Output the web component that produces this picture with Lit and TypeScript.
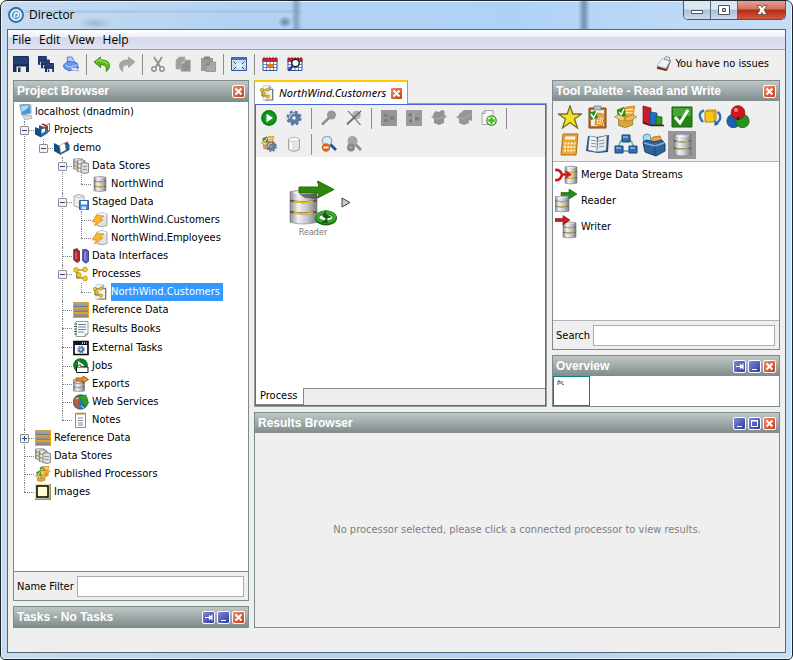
import { LitElement, html, svg, css, nothing, TemplateResult, SVGTemplateResult } from "lit";
import { customElement, state } from "lit/decorators.js";
import { classMap } from "lit/directives/class-map.js";

/** A stack of three metal drums with golden seams. */
const drums = (x: number, y: number, w: number, h: number): SVGTemplateResult => {
  const c = h * 0.05;
  const r = x + w;
  const m = x + w / 2;
  return svg`
    <path d="M${x} ${y + c}Q${m} ${y - c} ${r} ${y + c}V${y + h - c}Q${m} ${y + h + c} ${x} ${y + h - c}Z" fill="url(#metal)" stroke="#77777d" stroke-width=".6"/>
    <path d="M${x + w * 0.12} ${y + c * 1.4}Q${m} ${y + c * 3} ${r - w * 0.12} ${y + c * 1.4}" fill="none" stroke="#fff" stroke-opacity=".6" stroke-width="${c}"/>
    ${[1, 2].map((i) => {
      const t = y + (i * h) / 3;
      return svg`<path d="M${x} ${t - c / 2}Q${m} ${t + c * 1.5} ${r} ${t - c / 2}" fill="none" stroke="#55555a" stroke-width="${c * 1.2}"/>
        <path d="M${x + w * 0.14} ${t}Q${m} ${t + c * 1.3} ${r - w * 0.14} ${t}" fill="none" stroke="#f2c20c" stroke-width="${c}"/>`;
    })}`;
};

const gear = (cx: number, cy: number, r: number, fill: string): SVGTemplateResult => svg`
  <circle cx=${cx} cy=${cy} r=${r * 0.84} fill="none" stroke=${fill} stroke-width=${r * 0.32} stroke-dasharray="${r * 0.38} ${r * 0.28}"/>
  <circle cx=${cx} cy=${cy} r=${r * 0.52} fill="none" stroke=${fill} stroke-width=${r * 0.56}/>
  <path d="M${cx - r * 0.6} ${cy + r * 0.1}A${r * 0.6} ${r * 0.6} 0 0 1 ${cx + r * 0.1} ${cy - r * 0.6}" fill="none" stroke="#dfeaf6" stroke-opacity=".7" stroke-width=${r * 0.2}/>`;

const box = (x: number, y: number, k: number): SVGTemplateResult => svg`
  <g transform="translate(${x} ${y}) scale(${k})">
    <path d="M6 8L8 1L15 0L13.500 8Z" fill="#f4a62a" stroke="#b77412" stroke-width=".5"/>
    <path d="M8 3L13.500 2.500M7.500 5H13.500" stroke="#fff3cf" stroke-width=".8"/>
    <path d="M2 3L7 1L8 7L3 8.500Z" fill="#2f9a16" stroke="#1d6b0a" stroke-width=".5"/>
    <path d="M3.500 4.500L5 6.500L7 2" stroke="#fff" fill="none"/>
    <path d="M3 10L13.500 9V14L8 16L3 14.500Z" fill="#d9a73d" stroke="#9d741c" stroke-width=".6"/>
    <path d="M0 8L3 6.500L8 8.500L6 11.500Z" fill="#f3cf78" stroke="#9d741c" stroke-width=".5"/>
    <path d="M8 8.500L13.500 6.500L16.500 8L12 11L7.500 11Z" fill="#e6bb58" stroke="#9d741c" stroke-width=".5"/>
  </g>`;

const nodes = svg`
  <path d="M4 4V12H11M4 4H11" fill="none" stroke="#6b5a16" stroke-width="1.200"/>
  ${[[3, 4], [12, 3.500], [6, 9], [12, 12.5]].map(([x, y]) => svg`<circle cx=${x} cy=${y} r="2.400" fill="#f3cf1a" stroke="#a38208" stroke-width=".6"/>`)}`;

const refTable = svg`<path d="M0 0H16V16H0Z" fill="#9c9c9c"/><path d="M0 1H16M0 6H16M0 10.500H16M0 15.500H16" stroke="#f0a416" stroke-width="1.200"/>
  <path d="M.5 0V16M15.500 0V16" stroke="#efa213"/><path d="M1 4.500H15M1 9.200H15M1 14H15" stroke="#777" stroke-width="1"/>`;

const calendar = svg`<path d="M1 3H15V14.500H1Z" fill="#fff" stroke="#33548c"/><path d="M.5 2H15.500V6H.5Z" fill="#c4262c"/>
  <path d="M2 1V3.500M5 1V3.500M8 1V3.500M11 1V3.500M14 1V3.500" stroke="#5c2a30"/>
  <path d="M1 8.500H15M1 11.500H15M4.500 6V14M8 6V14M11.500 6V14" stroke="#5578b5" stroke-width=".9"/>`;

const floppy = (x: number, y: number, k: number): SVGTemplateResult => svg`<g transform="translate(${x} ${y}) scale(${k})">
  <path d="M0 0H15L16 1V16H0Z" fill="#17305c"/><path d="M1 1H15V8H1Z" fill="#233f73"/>
  <path d="M3.500 10.500H13V16H3.500Z" fill="#e9edf3"/><path d="M5 11.500H7.500V16H5Z" fill="#22304c"/></g>`;

const ICONS: Record<string, SVGTemplateResult> = {
  app: svg`<circle cx="8" cy="8" r="7.900" fill="#2a5d88"/><circle cx="8" cy="8" r="6.800" fill="#4d9bd0"/>
    <circle cx="8" cy="8" r="5" fill="none" stroke="#fff" stroke-width="1.500"/>
    <path d="M6.500 11V7.800A2 2 0 1 1 8.500 9.800" fill="none" stroke="#fff" stroke-width="1.500"/>`,
  save: floppy(0, 0, 1),
  saveAll: svg`${floppy(0, 0, 0.55)}${floppy(3, 3.5, 0.55)}${floppy(7, 7, 0.56)}`,
  print: svg`<path d="M4 1H9L12 7H5Z" fill="#b9d0f6" stroke="#5d88d8"/><path d="M.5 9L5 5L14 7L15.500 12L6 15L1 12Z" fill="#6a95e6" stroke="#3562bd" stroke-width=".8"/>
    <path d="M2 9L6 11L14 9" stroke="#bcd3fb" fill="none"/><path d="M7 11L14 12L15.500 15L9 14Z" fill="#e8f0fe" stroke="#5b86d8" stroke-width=".6"/>`,
  undo: svg`<path d="M0 6L6.500 1V4C12 3.500 15.500 6 15.500 9.500C15.500 12.500 14 14.500 12 15.500C13 12 12 8.500 6.500 8.800V11.500Z" fill="#58bb17" stroke="#2c7a05" stroke-width=".8"/>
    <path d="M2 6L6 3V5C10 5 13 6 14 8.500" fill="none" stroke="#a9ea70" stroke-width=".9"/>`,
  redo: svg`<path d="M16 6L9.500 1V4C4 3.500 .5 6 .5 9.500C.5 12.500 2 14.500 4 15.500C3 12 4 8.500 9.500 8.800V11.500Z" fill="#a6a6a6" stroke="#8f8f8f" stroke-width=".6"/>`,
  cut: svg`<path d="M4 1L10.500 11.500M12 1L5.500 11.500" stroke="#909090" stroke-width="1.800"/><circle cx="4" cy="13" r="2.200" fill="none" stroke="#909090" stroke-width="1.500"/><circle cx="12" cy="13" r="2.200" fill="none" stroke="#909090" stroke-width="1.500"/>`,
  copy: svg`<path d="M1 4L4 1H10V13H1Z" fill="#9d9d9d" stroke="#b3b3b3" stroke-width=".7"/><path d="M6 7L9 4H15.500V15.500H6Z" fill="#929292" stroke="#bcbcbc" stroke-width=".7"/><path d="M9 4V7H6" stroke="#c8c8c8" fill="none"/>`,
  paste: svg`<path d="M1 2H13V15H1Z" fill="#9a9a9a"/><path d="M4 .5H10V3.500H4Z" fill="#858585"/><path d="M6 9L9 6H15.500V15.500H6Z" fill="#a9a9a9" stroke="#878787" stroke-width=".7"/><path d="M9 6V9H6" stroke="#777" fill="none"/>`,
  fit: svg`<path d="M.5 1.500H15.500V14.500H.5Z" fill="#cfe2f2" stroke="#27589a"/><path d="M1 1.500H15V4H1Z" fill="#3c77c0"/>
    <path d="M2.500 5.500L5 8M13.500 5.500L11 8M2.500 13.500L5 11M13.500 13.500L11 11" stroke="#1d3f78"/><path d="M5 7H11V12H5Z" fill="#dfedf6"/>`,
  calendar: svg`${calendar}<path d="M5 8H11V11H5Z" fill="#ec7b1f"/>`,
  calendarFind: svg`${calendar}<circle cx="8.500" cy="7" r="3.700" fill="#fff" stroke="#111" stroke-width="1.300"/><path d="M5.500 10L1.500 14.500" stroke="#1c33b0" stroke-width="2.200"/>`,
  issues: svg`<path d="M1 11L6 3L15 5L11 15L1 13Z" fill="#8a5236"/><path d="M1 10L6 2.500L14.500 4.500L10 12.500Z" fill="#eef1f6" stroke="#8d93a3" stroke-width=".6"/>
    <path d="M8 3L10 .5L13.500 1.500L14 5Z" fill="#dfe4ee" stroke="#6f7a92" stroke-width=".8"/><path d="M1 11.500L10 14.500" stroke="#5d2f1b" stroke-width="1.300"/>`,
  host: svg`<path d="M2 1L12 0L13 9L4 11Z" fill="#3b9ae4" stroke="#8fa0b5" stroke-width="1.200"/><path d="M3 2L11 1.200L9 5L3.500 8Z" fill="#aadcfb"/><path d="M12 0L14 1V9L13 9Z" fill="#ced4dc"/>
    <path d="M5 12L13 11L14 14L7 16Z" fill="#d8dde4" stroke="#8c97a6" stroke-width=".6"/>`,
  projects: svg`<path d="M4 3L9 5L15 1V9L9 13L4 10Z" fill="#1f5d8f"/><path d="M9 5L14.500 1.500V8L9 12Z" fill="#fff" stroke="#555" stroke-width=".5"/><path d="M7 2L12 4" stroke="#c32222" stroke-width="1.500"/>
    <path d="M0 5L6 7.500V15.500L0 12.500Z" fill="#134f80"/><path d="M6 7.500L13 4V11L6 15.500Z" fill="#2270a8"/><path d="M6.500 7.500L10 5.800V9.500L6.500 11.500Z" fill="#fff"/><path d="M8.500 6.500L12 4.500V7" stroke="#c32222" stroke-width="1.300" fill="none"/>`,
  project: svg`<path d="M0 3L6 6V14.500L0 11Z" fill="#14507f"/><path d="M6 6L13 2L15.500 5V10L6 15Z" fill="#1c5f94"/><path d="M5.500 5.500L11 2.500L12 10L6.500 13Z" fill="#fff" stroke="#777" stroke-width=".5"/><path d="M10.500 4L13.500 2.500L14 6" stroke="#c32222" stroke-width="1.300" fill="none"/>`,
  stores: svg`${drums(0.5, 0.5, 9, 11)}${drums(4, 2, 8, 12)}<path d="M8 5.500Q12 3.500 15.500 5.500V14.500Q12 16.500 8 14.500Z" fill="#dcdce0" stroke="#707076" stroke-width=".8"/><path d="M9.500 8.500H14M9.500 11.500H14" stroke="#98989f"/>`,
  store: drums(2, 0.5, 12, 15),
  staged: svg`<path d="M1 2Q6 -1 11 2V12Q6 15 1 12Z" fill="#ededf0" stroke="#8f8f96" stroke-width=".7"/><path d="M1 2.500Q6 5 11 2.500" fill="none" stroke="#b5b5bb" stroke-width=".7"/>
    <path d="M6.500 6.500H15.500V15.500H6.500Z" fill="#4d83cf" stroke="#2c61ad"/><path d="M8 7H14V10.500H8Z" fill="#fff"/><path d="M8.500 12.500H13V15.500H8.500Z" fill="#cfe0f7"/>`,
  snapshot: svg`<path d="M5 2Q10 -.5 15 2V13.500Q10 16 5 13.500Z" fill="#e2e2e8" stroke="#85858c" stroke-width=".7"/><ellipse cx="10" cy="2.500" rx="4.500" ry="1.500" fill="#f8f8fb"/>
    <path d="M4.500 3L12 4L8 7L11 8L2 14L4.500 10L0 10Z" fill="#f9b92d" stroke="#d98b12" stroke-width=".7"/>`,
  interfaces: svg`<path d="M0 1L5 0V13L3.500 14L0 12Z" fill="#7d7d86"/><path d="M1.500 2Q4 0 6.500 3V13Q4 16 1.500 12Z" fill="#b9272b" stroke="#6e1a20" stroke-width=".8"/><path d="M9 1H14V13H9Z" fill="#84848e"/><path d="M10 3Q12.500 0 15.500 3V13Q13 17 10 13Z" fill="#5b63c4" stroke="#2d3176" stroke-width=".8"/><path d="M3 4V11M12 4V12" stroke="#fff" stroke-opacity=".5"/>`,
  processes: nodes,
  process: svg`<path d="M4 .5H11L14.500 4V15.500H4Z" fill="#f3f3f5" stroke="#c2c2c6" stroke-width=".7"/><path d="M3 5V11H9M3 5H9" fill="none" stroke="#6b5a16"/>
    ${[[3, 5], [9, 4.5], [5, 8.5], [9, 11.5]].map(([x, y]) => svg`<circle cx=${x} cy=${y} r="1.700" fill="#f0c81a" stroke="#8d7008" stroke-width=".5"/>`)}<path d="M11 1V4.500H14M13.500 5V15H6" stroke="#76767b" fill="none"/>`,
  reference: refTable,
  results: svg`<path d="M3 .5H15V13L12 15.500H3Z" fill="#fbfcf4" stroke="#8a9488" stroke-width=".9"/><path d="M5 3.500H13M5 6H13M5 8.500H13M5 11H11" stroke="#5b86b8"/><path d="M1 3H4M1 5.500H4M1 8H4M1 10.500H4M1 13H4" stroke="#3f6f48" stroke-width="1.200"/><path d="M12 15.500V13H15" stroke="#8a9488" fill="#cdd6bd"/>`,
  external: svg`<path d="M1 1.500H15V14.500H1Z" fill="#fff" stroke="#000" stroke-width="1.600"/><path d="M1 1H15V5H1Z" fill="#10142c"/><path d="M9 3H13.500" stroke="#fff" stroke-dasharray="1 1" stroke-width="1.500"/>${gear(8, 9.5, 3.8, "#5877a8")}`,
  jobs: svg`<circle cx="7.500" cy="7.500" r="7.300" fill="#0c7f17"/><path d="M5 3L11.500 7.500L5 11Z" fill="#fff"/><path d="M3.500 9H15V14.500H3.500Z" fill="#fff" stroke="#111" stroke-width="1"/><path d="M4 9L6 7H8V9" fill="#fff" stroke="#111" stroke-width=".8"/>`,
  exports: svg`${drums(0.500, 3, 11, 12.500)}<path d="M3 2H10V0L15.500 3.500L10 7V5H3Z" fill="#f09223" stroke="#8a4304" stroke-width=".8"/>`,
  web: svg`<circle cx="7.500" cy="8" r="7.300" fill="#2b78b6" stroke="#1d4f7c" stroke-width=".7"/><path d="M1 6Q2 1 6 1L7 6L5 9L7 14Q1 13 1 6Z" fill="#d0562e"/><path d="M5 2L13 1L15.500 9L12 13L9 7Z" fill="#2fa32b" stroke="#15700f" stroke-width=".6"/><path d="M3 5L6 4M8 12L11 14" stroke="#bfe0f5"/>`,
  notes: svg`<path d="M2.500 1.500H12.500V15.500H2.500Z" fill="#fff" stroke="#8b8b92"/><path d="M4 .5V3M6 .5V3M8 .5V3M10 .5V3M12 .5V3" stroke="#b98b2a"/><path d="M5 6H10M5 8.500H10M5 11H10M5 13H10" stroke="#737a85" stroke-width=".9"/>`,
  published: svg`<g transform="translate(3.500 -.5)">${box(0, 0, 0.72)}</g>${box(0, 4, 0.74)}`,
  images: svg`<path d="M0 0H16V16H0Z" fill="#9c9468"/><path d="M0 0H14.500V14.500H0Z" fill="#e8dfb0"/><path d="M2 2H13V13H2Z" fill="#fffbd2" stroke="#000" stroke-width="1.500"/>`,
  run: svg`<circle cx="8" cy="8" r="7.900" fill="#087f10"/><circle cx="8" cy="8" r="6" fill="#16981d"/><path d="M5.500 3.800L12 8L5.500 12.200Z" fill="#fff"/>`,
  gear: gear(8, 8, 7.6, "#5c7ba3"),
  link: svg`<circle cx="10.500" cy="5" r="4.500" fill="#979797"/><path d="M8 8L1 14.500" stroke="#8b8b8b" stroke-width="2.400"/>`,
  unlink: svg`<circle cx="10.500" cy="5" r="4.300" fill="#b0b0b0"/><path d="M8 8L1 14.500" stroke="#a2a2a2" stroke-width="2.200"/><path d="M2 1L14.500 15M15 1L1 14" stroke="#5e5e5e" stroke-width="1.100"/>`,
  group: svg`<path d="M0 0H16V16H0Z" fill="#969696"/><path d="M3 4H7V7H3ZM9 6H13V10H9ZM3 9H7V12H3Z" fill="#7e7e7e"/>`,
  ungroup: svg`<path d="M0 0H16V16H0Z" fill="#9b9b9b"/><path d="M2.500 3.500H6V6.500H2.500ZM9 7H13V10.500H9ZM3 9.500H6.500V12.500H3Z" fill="#7c7c7c"/><path d="M7.500 3V13" stroke="#b5b5b5"/>`,
  pack: svg`<path d="M2 4L5 1L8 2L11 0L13.500 1V5L16 6L13 9V13L8 15L3 13V9L0 7L2.500 5.500Z" fill="#929292"/><path d="M1 7L7 9L14 6.500" stroke="#adadad" fill="none"/>`,
  unpack: svg`<path d="M3 4L8 0H16V11L13 10V13L8 15L3 13V9L0 7L3 5.500Z" fill="#979797"/><path d="M1 7L7 9L15 4" stroke="#b0b0b0" fill="none"/>`,
  addPage: svg`<path d="M1 3L4 .5H12V14.500H1Z" fill="#f6f6f8" stroke="#a6a6ac"/><path d="M4 .5V3.500H1" fill="none" stroke="#a6a6ac"/><circle cx="10.500" cy="10.500" r="4.700" fill="#fff" stroke="#2c8c12" stroke-width="1.200"/><path d="M10.500 7.200V13.800M7.200 10.500H13.800" stroke="#34c40b" stroke-width="2.400"/>`,
  packGear: svg`${box(0, 0, 0.85)}${gear(10.500, 10.500, 5.400, "#64789a")}`,
  cylinder: svg`<path d="M2.500 3Q8 -.5 13.500 3V13.500Q8 17 2.500 13.500Z" fill="#e4e4e6" stroke="#a3a3a6"/><ellipse cx="8" cy="3.500" rx="5" ry="2" fill="#fafafa" stroke="#b8b8bb" stroke-width=".6"/><path d="M5 7V13" stroke="#fff" stroke-width="2"/>`,
  zoomOut: svg`<circle cx="6" cy="5" r="4.700" fill="#d9ecf9" stroke="#8fa6b8" stroke-width="1.300"/><path d="M9.500 8.500L15 14" stroke="#1c57a5" stroke-width="2.800"/><circle cx="5" cy="11.500" r="4.200" fill="#dc6219"/><path d="M2.500 11.500H7.500" stroke="#fff" stroke-width="1.800"/>`,
  zoomIn: svg`<circle cx="6.500" cy="5" r="5" fill="#a4a4a4"/><path d="M9.500 8.500L15 14" stroke="#909090" stroke-width="2.800"/><circle cx="5" cy="11.500" r="3.900" fill="#858585"/><path d="M3 11.500H7M5 9.500V13.500" stroke="#aaa" stroke-width="1"/>`,
};

/** Palette art is drawn on a 24 unit square. */
const PALETTE: Record<string, SVGTemplateResult> = {
  star: svg`<path d="M12 .8L14.700 9H23.500L16.500 14L19.500 23L12 17.500L4.500 23L7.500 14L.5 9H9.300Z" fill="#f3e22a" stroke="#77711c" stroke-width="1.300"/>`,
  profile: svg`<path d="M3 3H20V23H3Z" fill="#b9713c" stroke="#7f4519"/><path d="M5 5H18V21H5Z" fill="#f2efe9"/><path d="M8 1H15V5H8Z" fill="#bfc4cb" stroke="#70757d" stroke-width=".7"/>
    <path d="M11 8L19 9.500L16.500 21L9 19.500Z" fill="#f3a536" stroke="#a96a12" stroke-width=".7"/><path d="M11.500 13L17.500 14M11 15.500L17 16.500M10.500 18L16 19" stroke="#fff" stroke-width="1.200" stroke-dasharray="1.500 1"/><path d="M4 7L10 6L12 13L5 15Z" fill="#2a8a1c"/><path d="M5 9L7.500 13L11.500 5.500" stroke="#fff" stroke-width="1.500" fill="none"/>`,
  packaged: box(0.5, 1, 1.35),
  chart: svg`<path d="M1 1L9 3V19L1 18Z" fill="#c51d2c" stroke="#7c0e18" stroke-width=".7"/><path d="M8 7L15 8V20H8Z" fill="#1f6fc0" stroke="#12457d" stroke-width=".7"/><path d="M14 11L20 12V20H14Z" fill="#2d9a22" stroke="#175d10" stroke-width=".7"/><path d="M1 18L9 20.500H22" stroke="#641018" stroke-width="1.400" fill="none"/>`,
  check: svg`<path d="M2 2H22V22H2Z" fill="#258216" stroke="#17600b"/><path d="M3 3H21V11H3Z" fill="#47a437"/><path d="M5 12L10 18L18 5" stroke="#fff" stroke-width="3" fill="none"/>`,
  transform: svg`<path d="M7 6.500L9 5H18V15L16 17H7Z" fill="#f5c51d" stroke="#b48609"/><path d="M7 6.500H16V17M16 6.500L18 5" fill="none" stroke="#c8950e" stroke-width=".8"/><path d="M6 5.500Q1 7 2 12Q3 15 5 17" fill="none" stroke="#2f74ae" stroke-width="2.400"/><path d="M19.500 7Q23 9 22 14Q21 17 18 18" fill="none" stroke="#2f74ae" stroke-width="2.400"/><path d="M16.500 15.500V21L21 19Z" fill="#23608f"/>`,
  match: svg`<circle cx="7.500" cy="16" r="6.700" fill="#1d62ae" stroke="#123f73" stroke-width=".7"/><circle cx="16.500" cy="16" r="6.700" fill="#25951e" stroke="#125a0e" stroke-width=".7"/><circle cx="12" cy="7.500" r="6.800" fill="#d2141d" stroke="#820a10" stroke-width=".7"/><circle cx="10" cy="5" r="2" fill="#f0878a"/><path d="M12 11L10 14.500H14Z" fill="#1e2533"/>`,
  maths: svg`<path d="M5 1H20L18 22H3Z" fill="#f2a838" stroke="#a86e13"/><path d="M7 3H18L17.500 7H6.500Z" fill="#fdf6dc" stroke="#c48a2d" stroke-width=".6"/><path d="M6.500 10.500H17.500M6 14H17M6 17.500H17" stroke="#fff5d0" stroke-width="2" stroke-dasharray="2 1.200"/>`,
  book: svg`<path d="M2 3L11 4L23 2L22 19L12 20L0 18Z" fill="#1c4f80"/><path d="M3.500 3L11 4.500L11 19L2 17Z" fill="#f7f7fa" stroke="#7c8794" stroke-width=".6"/><path d="M12 4.500L21 2.500L20 17.500L11 19Z" fill="#e8ebf0" stroke="#7c8794" stroke-width=".6"/><path d="M5 7L10 8M5 10L10 11M4.500 13L10 14M13 8L18.500 7M13 11L18.500 10M13 14L18 13" stroke="#8b93a0"/>`,
  hierarchy: svg`<path d="M12 5Q4 7 5 16M12 5Q20 7 19 16M6 18H18" stroke="#6fb6a8" stroke-width="1.800" fill="none"/><path d="M8 2H16V9H8ZM1 13H9V20H1ZM15 13H23V20H15Z" fill="#336fae" stroke="#1b4579"/><path d="M9 3H14V5H9ZM2 14H7V16H2ZM16 14H21V16H16Z" fill="#77a9dc"/>`,
  toolbox: svg`<path d="M8 8L11 4L18 3L20 9Z" fill="#f0a33a" stroke="#9a5e0e" stroke-width=".7"/><circle cx="5" cy="5" r="4" fill="#a7def6" stroke="#5792b3"/><path d="M1 9L4 7L12 9L20 7L23 11V18L14 23L3 19Z" fill="#2f6399" stroke="#183d66"/><path d="M2 10L13 13L22 10" stroke="#83b0dc" fill="none" stroke-width="1.500"/><path d="M13 13V22" stroke="#1a426d"/>`,
  drums: drums(4, 1, 17, 22),
  merge: svg`${drums(10, 3, 12, 18)}<path d="M0 7Q5 6 7 11.500H12M0 17Q5 18 7 12" stroke="#ce1b22" stroke-width="2.600" fill="none"/><path d="M10 7L17 11.500L10 16L12 11.500Z" fill="#ce1b22"/>`,
  reader: svg`${drums(0, 7, 14, 16)}<path d="M6 3.500H14V0L22 5L14 10V6.500H6Z" fill="#238c13" stroke="#176008" stroke-width=".6"/>`,
  writer: svg`${drums(8, 7, 13, 16)}<path d="M0 3.500H8V.5L15 5L8 10V6.500H0Z" fill="#cd1c22" stroke="#831015" stroke-width=".6"/>`,
};

const icon = (name: string): TemplateResult => html`<svg class="icon" viewBox="0 0 16 16" aria-hidden="true">${ICONS[name]}</svg>`;
const art = (name: string): TemplateResult => html`<svg class="art" viewBox="0 0 24 24" aria-hidden="true">${PALETTE[name]}</svg>`;

interface TreeNode {
  label: string;
  icon: string;
  tall?: boolean;
  closed?: boolean;
  children?: TreeNode[];
}

const TREE: TreeNode[] = [
  {
    label: "Projects", icon: "projects", children: [
      {
        label: "demo", icon: "project", children: [
          { label: "Data Stores", icon: "stores", children: [{ label: "NorthWind", icon: "store" }] },
          {
            label: "Staged Data", icon: "staged", children: [
              { label: "NorthWind.Customers", icon: "snapshot" },
              { label: "NorthWind.Employees", icon: "snapshot" },
            ],
          },
          { label: "Data Interfaces", icon: "interfaces" },
          { label: "Processes", icon: "processes", children: [{ label: "NorthWind.Customers", icon: "process" }] },
          { label: "Reference Data", icon: "reference" },
          { label: "Results Books", icon: "results", tall: true },
          { label: "External Tasks", icon: "external", tall: true },
          { label: "Jobs", icon: "jobs" },
          { label: "Exports", icon: "exports" },
          { label: "Web Services", icon: "web" },
          { label: "Notes", icon: "notes" },
        ],
      },
    ],
  },
  { label: "Reference Data", icon: "reference", closed: true },
  { label: "Data Stores", icon: "stores" },
  { label: "Published Processors", icon: "published" },
  { label: "Images", icon: "images" },
];

type PanelAction = "pin" | "min" | "max" | "close";

const ACTIONS: Record<PanelAction, { label: string; shape: SVGTemplateResult }> = {
  pin: { label: "Dock", shape: svg`<path d="M2 5.500H6M9 2.500V8.500M6.500 3.500V7.500M6 3.500L8.500 5.500L6 7.500" stroke="#fff" stroke-width="1.200" fill="none"/>` },
  min: { label: "Minimise", shape: svg`<path d="M3 8.500H8" stroke="#fff"/>` },
  max: { label: "Maximise", shape: svg`<path d="M2.500 3H8.500V8.500H2.500Z" stroke="#fff" fill="none"/><path d="M2 2.500H9" stroke="#fff"/>` },
  close: { label: "Close", shape: svg`<path d="M2.500 2.500L8.500 8.500M8.500 2.500L2.500 8.500" stroke="#fff" stroke-width="2"/>` },
};

const action = (kind: PanelAction): TemplateResult => html`
  <button class=${classMap({ act: true, danger: kind === "close" })} aria-label=${ACTIONS[kind].label}>
    <svg viewBox="0 0 11 11" aria-hidden="true">${ACTIONS[kind].shape}</svg>
  </button>`;

const panelHead = (title: string, actions: PanelAction[]): TemplateResult => html`
  <header class="head"><h2>${title}</h2>${actions.map(action)}</header>`;

const tool = (name: string, label: string): TemplateResult => html`<button class="tool" aria-label=${label}>${icon(name)}</button>`;
const sep = html`<span class="sep"></span>`;

@customElement("app-root")
export class AppRoot extends LitElement {
  @state() private selected = "Processes/NorthWind.Customers";
  @state() private family = "drums";

  static styles = css`
    :host { display: block; }
    * { box-sizing: border-box; }
    button { font: inherit; color: inherit; border: 0; padding: 0; background: none; }
    ul { list-style: none; margin: 0; padding: 0; }
    h1, h2 { margin: 0; }
    svg { display: block; }
    .defs { position: absolute; width: 0; height: 0; }
    .icon { width: 16px; height: 16px; flex: none; }
    .art { width: 24px; height: 24px; flex: none; }

    .window {
      min-height: 100vh; display: flex; flex-direction: column; padding: 0 6px 6px;
      border: 1px solid #20252c; border-radius: 7px 7px 5px 5px;
      background: linear-gradient(90deg, #c8dcf0 0, #b2d2f3 30%, #aed2f7 65%, #c6def6 100%);
      box-shadow: inset 0 0 0 1px #eaf4fd;
      font-family: "DejaVu Sans Condensed", "Noto Sans", sans-serif; font-size: 11px; line-height: 16px; color: #000;
    }
    .title {
      height: 28px; display: flex; align-items: center; gap: 5px; padding-left: 1px;
      background:
        radial-gradient(ellipse 18px 6px at 88px 22px, #90a8c2aa, transparent),
        radial-gradient(ellipse 7px 6px at 278px 21px, #5a7188cc, transparent),
        linear-gradient(90deg, transparent 284px, #6f8aa8aa 289px, transparent 295px),
        linear-gradient(90deg, transparent 571px, #5f7f9fcc 577px, transparent 583px),
        linear-gradient(90deg, #8ba7c544 290px, transparent 296px) 0 9px / 100% 3px no-repeat;
    }
    h1 { font: 12px/16px "Open Sans", "Noto Sans", sans-serif; flex: 1; }
    .controls { display: flex; align-self: flex-start; border: 1px solid #44576c; border-top: 0; border-radius: 0 0 5px 5px; overflow: hidden; }
    .controls button { width: 27px; height: 18px; display: grid; place-items: center; border-right: 1px solid #55697e; background: linear-gradient(#dbe7f3 45%, #a9bfd6 50%, #c9dcee); }
    .controls .quit { width: 47px; border: 0; background: linear-gradient(#e4a394, #d1705c 45%, #b22c15 50%, #d2583a); }
    .controls svg { width: 14px; height: 12px; }

    .client { flex: 1; display: flex; flex-direction: column; border: 1px solid #56666e; background: #efefef; }
    .menu { height: 20px; display: flex; border-bottom: 1px solid #9b9fa8; background: linear-gradient(#fff, #eef0f8 35%, #d4d9ec 40%, #dfe4f3); font: 12px/19px "Open Sans", "Noto Sans", sans-serif; }
    .menu button { padding: 0 4px; }
    .bar { height: 28px; display: flex; align-items: center; }
    .tool { height: 24px; padding: 4px 4px 4px 5px; }
    .sep { width: 1px; height: 21px; margin: 0 2px 0 3px; background: #8d8d8d; }
    .issues { margin-left: auto; display: flex; align-items: center; gap: 3px; padding-right: 16px; }

    .desk { flex: 1; display: grid; grid-template-columns: 236px minmax(0, 1fr); gap: 5px; padding: 2px 5px 24px; }
    .left, .side { display: flex; flex-direction: column; gap: 5px; min-width: 0; }
    .right { display: grid; grid-template-rows: 327fr 216fr; gap: 5px; min-width: 0; }
    .upper { display: grid; grid-template-columns: minmax(0, 1fr) 228px; gap: 5px; }

    .panel { border: 1px solid #7e8b8b; display: flex; flex-direction: column; background: #efefef; }
    .grow { flex: 1; }
    .head { height: 20px; flex: none; display: flex; align-items: center; gap: 2px; padding: 0 3px; background: linear-gradient(#c0c7c7, #7f8c8c); }
    .head h2 { flex: 1; font: bold 12px/16px "Liberation Sans", Arial, sans-serif; color: #fff; white-space: nowrap; }
    .act { width: 13px; height: 13px; flex: none; border: 1px solid #fff; border-radius: 2px; background: linear-gradient(135deg, #8088d8, #2f3ba5); }
    .act.danger { background: linear-gradient(135deg, #f08d70, #cc3b10); }
    .act svg { width: 11px; height: 11px; }

    .tree { flex: 1; background: #fff; border: solid #7e8b8b; border-width: 1px 0; padding-top: 1px; }
    .row { height: 18px; display: flex; align-items: center; gap: 3px; position: relative; padding-left: 11px; }
    .row.tall { height: 19px; }
    .row.root { padding-left: 4px; gap: 1px; }
    .row button.name { height: 18px; line-height: 18px; white-space: nowrap; }
    .row button.on { background: #3399ff; color: #fff; padding-right: 3px; }
    .tree ul { margin-left: 19px; }
    .tree .top { margin-left: 10px; }
    .tree li { position: relative; }
    .tree li::before { content: ""; position: absolute; left: 0; top: 0; bottom: 0; border-left: 1px dotted #808080; }
    .tree li:last-child::before { bottom: auto; height: 9px; }
    .row:not(.root)::before { content: ""; position: absolute; left: 0; top: 9px; width: 10px; border-top: 1px dotted #808080; }
    .fold { position: absolute; left: -4px; top: 5px; width: 9px; height: 9px; border: 1px solid #8f8f8f; border-radius: 1px; background: #f4f4f4; }
    .fold svg { width: 7px; height: 7px; }
    .field { display: flex; align-items: center; gap: 3px; padding: 4px 4px 3px 3px; }
    .field input { flex: 1; min-width: 0; height: 21px; border: 1px solid #abadb3; background: #fff; font: inherit; padding: 0 3px; border-radius: 0; }

    .editor { display: flex; flex-direction: column; }
    .tab { align-self: flex-start; height: 24px; margin-bottom: -1px; position: relative; display: flex; align-items: center; gap: 4px; padding: 0 4px; border: solid #9a9a9a; border-width: 0 1px; border-top: 2px solid #ffc800; background: #fff; font-family: "Noto Sans", sans-serif; }
    .tab button { font-style: italic; }
    .frame { flex: 1; display: flex; flex-direction: column; border: 1px solid #9a9a9a; }
    .inner { flex: 1; display: flex; flex-direction: column; border: 1px solid #4c66d8; }
    .strip { height: 26px; display: flex; align-items: center; }
    .strip .sep { margin: 0 4px 0 5px; }
    .canvas { flex: 1; position: relative; background: #fff; }
    .node { position: absolute; left: 33px; top: 23px; width: 48px; }
    .node svg { width: 48px; height: 46px; }
    .node span { display: block; font-size: 9px; line-height: 12px; text-align: center; color: #777; }
    .port { position: absolute; left: 85px; top: 40px; width: 10px; height: 11px; }
    .foot { display: flex; height: 17px; }
    .foot button { background: #fff; padding: 0 5px 0 4px; line-height: 14px; border-bottom: 1px solid #8d8d8d; }
    .foot i { flex: 1; border: solid #7e8b8b; border-width: 1px 0 0 1px; }

    .families { display: flex; flex-wrap: wrap; padding: 2px 3px; }
    .families button { width: 28px; height: 28px; display: grid; place-items: center; }
    .families .on { background: #969696; }
    .procs { flex: 1; background: #fff; border: solid #b4b4b4; border-width: 1px 0; }
    .procs button { height: 26px; width: 100%; display: flex; align-items: center; gap: 2px; padding-left: 2px; }
    .map { height: 30px; background: #fff; }
    .view { width: 37px; height: 30px; border: 1px solid #0f7f7f; padding: 3px; }
    .view svg { width: 7px; height: 5px; }
    .empty { flex: 1; display: grid; place-items: center; margin: 0; color: #808080; }
  `;

  private node(n: TreeNode, parent: string): TemplateResult {
    const key = `${parent}/${n.label}`;
    const folds = n.children || n.closed;
    return html`<li role="treeitem">
      <div class=${classMap({ row: true, tall: !!n.tall })}>
        ${folds
          ? html`<button class="fold" aria-label="Toggle ${n.label}">
              <svg viewBox="0 0 7 7"><path d=${n.closed ? "M1 3.500H6M3.500 1V6" : "M1 3.500H6"} stroke="#28458c"/></svg>
            </button>`
          : nothing}
        ${icon(n.icon)}
        <button class=${classMap({ name: true, on: key === this.selected })} @click=${() => (this.selected = key)}>${n.label}</button>
      </div>
      ${n.children ? html`<ul role="group">${n.children.map((c) => this.node(c, n.label))}</ul>` : nothing}
    </li>`;
  }

  render() {
    return html`
      <svg class="defs" aria-hidden="true">
        <linearGradient id="metal">
          <stop offset="0" stop-color="#8b8b92"/><stop offset=".3" stop-color="#f1f1f5"/>
          <stop offset=".65" stop-color="#c2c2ca"/><stop offset="1" stop-color="#7c7c84"/>
        </linearGradient>
      </svg>
      <div class="window">
        <div class="title">
          ${icon("app")}
          <h1>Director</h1>
          <div class="controls">
            <button aria-label="Minimise window"><svg viewBox="0 0 14 12"><path d="M1.500 6.500H12.500V9.500H1.500Z" fill="#fff" stroke="#4d5560"/></svg></button>
            <button aria-label="Maximise window"><svg viewBox="0 0 14 12"><path d="M1.500 1.500H12.500V10.500H1.500ZM5.500 4.500V7.500H8.500V4.500Z" fill="#fff" stroke="#4d5560" fill-rule="evenodd"/></svg></button>
            <button class="quit" aria-label="Close window"><svg viewBox="0 0 14 12"><path d="M2 1.500H5.500L7 3.500L8.500 1.500H12L9 6L12 10.500H8.500L7 8.500L5.500 10.500H2L5 6Z" fill="#fff" stroke="#5a4444" stroke-width=".8"/></svg></button>
          </div>
        </div>
        <div class="client">
          <nav class="menu">${["File", "Edit", "View", "Help"].map((m) => html`<button>${m}</button>`)}</nav>
          <div class="bar">
            ${tool("save", "Save")}${tool("saveAll", "Save all")}${tool("print", "Print")}${sep}
            ${tool("undo", "Undo")}${tool("redo", "Redo")}${sep}
            ${tool("cut", "Cut")}${tool("copy", "Copy")}${tool("paste", "Paste")}${sep}
            ${tool("fit", "Full screen")}${sep}
            ${tool("calendar", "Events")}${tool("calendarFind", "Find events")}
            <button class="issues">${icon("issues")}You have no issues</button>
          </div>
          <main class="desk">
            <div class="left">
              <section class="panel grow">
                ${panelHead("Project Browser", ["close"])}
                <div class="tree" role="tree">
                  <div class="row root">${icon("host")}<button class="name">localhost (dnadmin)</button></div>
                  <ul class="top">${TREE.map((n) => this.node(n, ""))}</ul>
                </div>
                <div class="field"><label for="filter">Name Filter</label><input id="filter" type="text"></div>
              </section>
              <section class="panel">${panelHead("Tasks - No Tasks", ["pin", "min", "close"])}</section>
            </div>
            <div class="right">
              <div class="upper">
                <section class="editor">
                  <div class="tab">${icon("process")}<button>NorthWind.Customers</button>${action("close")}</div>
                  <div class="frame"><div class="inner">
                    <div class="strip">${tool("run", "Run")}${tool("gear", "Run preferences")}${sep}${tool("link", "Connect")}${tool("unlink", "Disconnect")}${sep}${tool("group", "Group")}${tool("ungroup", "Ungroup")}${tool("pack", "Make processor")}${tool("unpack", "Open processor")}${tool("addPage", "Add note")}${sep}</div>
                    <div class="strip">${tool("packGear", "Configure")}${tool("cylinder", "Data")}${sep}${tool("zoomOut", "Zoom out")}${tool("zoomIn", "Zoom in")}</div>
                    <div class="canvas">
                      <div class="node">
                        <svg viewBox="0 0 48 46" aria-hidden="true">
                          ${drums(1, 10, 27, 34)}
                          <path d="M10 14L16 18L28 19V14Z" fill="#444" opacity=".7"/>
                          <path d="M10 7H30L28.500 1L45 9.500L28.500 18L30 13H10Z" fill="#2d870c" stroke="#246c09"/>
                          <ellipse cx="37" cy="38" rx="9" ry="5.500" fill="none" stroke="#1c6213" stroke-width="4"/>
                          <ellipse cx="37" cy="37" rx="8.500" ry="5" fill="none" stroke="#38a62c" stroke-width="3.500"/>
                          <path d="M33 36L37 30V34L43 37L37 39ZM32 43L38 38L39 43Z" fill="#1a5c12"/>
                        </svg>
                        <span>Reader</span>
                      </div>
                      <svg class="port" viewBox="0 0 10 11"><path d="M1 1L9 5.500L1 10Z" fill="#c8c8c8" stroke="#444"/></svg>
                    </div>
                    <div class="foot"><button>Process</button><i></i></div>
                  </div></div>
                </section>
                <div class="side">
                  <section class="panel grow">
                    ${panelHead("Tool Palette - Read and Write", ["close"])}
                    <div class="families">
                      ${["star", "profile", "packaged", "chart", "check", "transform", "match", "maths", "book", "hierarchy", "toolbox", "drums"].map(
                        (f) => html`<button class=${classMap({ on: f === this.family })} aria-label=${f} @click=${() => (this.family = f)}>${art(f)}</button>`,
                      )}
                    </div>
                    <div class="procs">
                      <button>${art("merge")}Merge Data Streams</button>
                      <button>${art("reader")}Reader</button>
                      <button>${art("writer")}Writer</button>
                    </div>
                    <div class="field"><label for="search">Search</label><input id="search" type="text"></div>
                  </section>
                  <section class="panel">
                    ${panelHead("Overview", ["pin", "min", "close"])}
                    <div class="map"><div class="view"><svg viewBox="0 0 7 5"><path d="M1 5V1H3V4M5 1V4" stroke="#555" fill="none"/><path d="M5 4.500H7" stroke="#3bb030"/></svg></div></div>
                  </section>
                </div>
              </div>
              <section class="panel">
                ${panelHead("Results Browser", ["min", "max", "close"])}
                <p class="empty">No processor selected, please click a connected processor to view results.</p>
              </section>
            </div>
          </main>
        </div>
      </div>`;
  }
}
